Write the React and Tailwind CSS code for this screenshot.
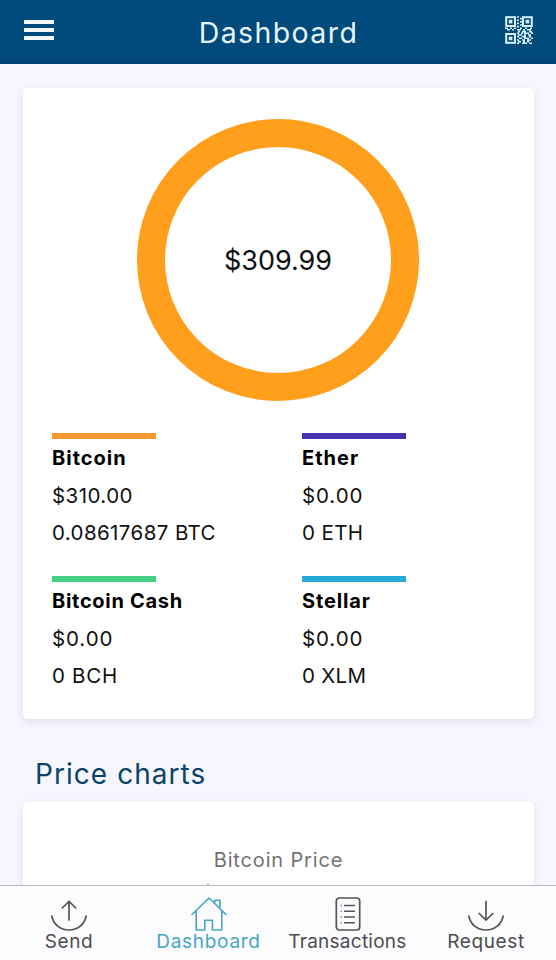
import React from "react";

const assets = [
  { name: "Bitcoin", nameTrack: "tracking-[1px]", fiat: "$310.00", fiatTrack: "tracking-[0.45px]", amount: "0.08617687 BTC", amountTrack: "tracking-[0.4px]", bar: "bg-[#f79a31]" },
  { name: "Ether", nameTrack: "tracking-[1px]", fiat: "$0.00", fiatTrack: "tracking-[0.9px]", amount: "0 ETH", amountTrack: "tracking-[0.4px]", bar: "bg-[#4733b0]" },
  { name: "Bitcoin Cash", nameTrack: "tracking-[0.7px]", fiat: "$0.00", fiatTrack: "tracking-[0.9px]", amount: "0 BCH", amountTrack: "tracking-[0.7px]", bar: "bg-[#45d185]" },
  { name: "Stellar", nameTrack: "tracking-[0.85px]", fiat: "$0.00", fiatTrack: "tracking-[0.9px]", amount: "0 XLM", amountTrack: "tracking-[0.3px]", bar: "bg-[#27a9d8]" },
];

function Asset({ a }) {
  return (
    <div className="h-[143px] whitespace-nowrap text-[20.5px] text-[#111]">
      <div className={`h-[6px] w-[104px] ${a.bar}`} />
      <div className={`mt-[1px] h-[37px] text-[20px] leading-[37px] font-bold text-black ${a.nameTrack}`}>{a.name}</div>
      <div className={`h-[37px] leading-[38px] ${a.fiatTrack}`}>{a.fiat}</div>
      <div className={`h-[37px] leading-[38px] ${a.amountTrack}`}>{a.amount}</div>
    </div>
  );
}

function QrIcon() {
  return (
    <svg width="28" height="28" viewBox="0 0 28 28" fill="none" stroke="#d9f1fd">
      <g strokeWidth="2">
        <rect x="1.2" y="1.2" width="8.800" height="8.800" />
        <rect x="18" y="1.2" width="8.800" height="8.800" />
        <rect x="1.2" y="18" width="8.800" height="8.800" />
      </g>
      <g fill="#d9f1fd" stroke="none">
        <rect x="3.800" y="3.800" width="3.600" height="3.600" />
        <rect x="20.600" y="3.800" width="3.600" height="3.600" />
        <rect x="3.800" y="20.600" width="3.600" height="3.600" />
      </g>
      <path
        strokeWidth="1.6"
        d="M12 1h2m1 1.6h2M12 4.2h2m1 1.6h2M12 7.4h2m1 1.6h2M12 10.6h2M0 12.2h3m2 0h2m2 0h2m4 0h2m3 0h2m3 0h2M2 13.8h3m2 0h2m3 0h4m2 0h2m2 0h4M13 15.6h2m2 0h4m3 0h3M12 17.2h2m2 0h2m1 0h5m2 0h2M13 19h4m2 0h2m2 0h3M12 20.6h2m3 0h4m3 0h2M14 22.2h3m2 0h5m2 0h2M12 24h2m3 0h3m2 0h4M13 25.6h3m2 0h2m2 0h2M12 27.2h2m3 0h5m2 0h3"
      />
    </svg>
  );
}

function SendIcon() {
  return (
    <svg width="40" height="34" viewBox="0 0 40 34" fill="none" stroke="#555559" strokeWidth="1.7" strokeLinecap="round">
      <path d="M20 23V4.500M13.200 11l6.800-6.500 6.800 6.500M2.800 19C4.5 27.500 11 33 20 33S35.500 27.500 37.200 19" />
    </svg>
  );
}

function RequestIcon() {
  return (
    <svg width="40" height="34" viewBox="0 0 40 34" fill="none" stroke="#555559" strokeWidth="1.7" strokeLinecap="round">
      <path d="M20 4.500V23M13.200 16.500l6.800 6.500 6.800-6.500M2.800 19C4.500 27.500 11 33 20 33S35.500 27.500 37.200 19" />
    </svg>
  );
}

function HomeIcon() {
  return (
    <svg width="40" height="34" viewBox="0 0 40 34" fill="none" stroke="#48a6c4" strokeWidth="1.600" strokeLinecap="round" strokeLinejoin="round">
      <path d="M3 17.500L20 1l17 16.500M7.200 14V33h8.600V23.200h7.600V33h9.400V14M25.700 6.200V3.200h5.300v8" />
    </svg>
  );
}

function ListIcon() {
  return (
    <svg width="40" height="34" viewBox="0 0 40 34" fill="none" stroke="#555559" strokeWidth="1.700">
      <rect x="8.300" y="1" width="23.400" height="32" rx="3" />
      <path strokeWidth="1.500" d="M16 8.500h11M16 14.300h11M16 20h11M16 25.700h11" />
      <path strokeWidth="1.500" stroke="#88888c" d="M12.500 8.500h1.500M12.500 14.300h1.500M12.500 20h1.500M12.500 25.700h1.500" />
    </svg>
  );
}

const tabs = [
  { label: "Send", Icon: SendIcon, cls: "text-[#4c4c50] tracking-[0.6px]", w: "w-[138px]" },
  { label: "Dashboard", Icon: HomeIcon, cls: "text-[#48a6c4] tracking-[0.7px]", w: "w-[141px]" },
  { label: "Transactions", Icon: ListIcon, cls: "text-[#4c4c50] tracking-[0.25px]", w: "w-[137px]" },
  { label: "Request", Icon: RequestIcon, cls: "text-[#4c4c50] tracking-[0.6px]", w: "w-[140px]" },
];

export default function App() {
  return (
    <div className="flex h-[960px] w-[556px] flex-col overflow-hidden bg-[#f6f7fe] font-[Inter,sans-serif]">
      <header className="flex h-16 shrink-0 items-center justify-between border-b-4 border-[#004477] bg-[#004a7c] pr-[23px] pl-6">
        <div className="flex w-[30px] flex-col gap-[4.500px]">
          <div className="h-[3.500px] bg-[#f0fbff]" />
          <div className="h-[3.500px] bg-[#f0fbff]" />
          <div className="h-[3.500px] bg-[#f0fbff]" />
        </div>
        <h1 className="-ml-[2px] pt-[5px] text-[28.500px] leading-[40px] tracking-[1.400px] text-[#e6f6ff]">Dashboard</h1>
        <QrIcon />
      </header>

      <main className="flex min-h-0 flex-1 flex-col overflow-hidden pt-6 pr-[22px] pl-[23px]">
        <section className="h-[631px] shrink-0 rounded-[5px] bg-white pt-[31px] shadow-[0_3px_10px_rgba(60,60,110,0.12)]">
          <div className="ml-[114px] flex size-[282px] items-center justify-center rounded-full border-[28px] border-[#ff9f1c] pt-[2px] text-[27px] text-[#111]">
            <span className="tracking-[0px]">$309.99</span>
          </div>
          <div className="mt-8 grid grid-cols-[250px_1fr] pl-[29px]">
            {assets.map((a) => (
              <Asset key={a.name} a={a} />
            ))}
          </div>
        </section>
        <h2 className="mt-[35px] h-[40px] shrink-0 pl-3 text-[28px] leading-[40px] tracking-[1.050px] text-[#0c4369]">Price charts</h2>
        <section className="mt-[8px] flex h-[200px] shrink-0 flex-col rounded-[5px] bg-white pt-[43px] text-center text-[20px] leading-[30px] tracking-[0.850px] text-[#737373] shadow-[0_3px_10px_rgba(60,60,110,0.12)]">
          <h3>Bitcoin Price</h3>
          <div className="mt-[9px] ml-[184px] h-[10px] w-[2px] bg-[#999]" />
        </section>
      </main>

      <nav className="flex h-[75px] shrink-0 border-t border-[#b9b9be] bg-[#fcfbfe]">
        {tabs.map(({ label, Icon, cls, w }) => (
          <div key={label} className={`flex flex-col items-center pt-[11px] ${w}`}>
            <Icon />
            <span className={`text-[19px] leading-[22px] ${cls}`}>{label}</span>
          </div>
        ))}
      </nav>
    </div>
  );
}
